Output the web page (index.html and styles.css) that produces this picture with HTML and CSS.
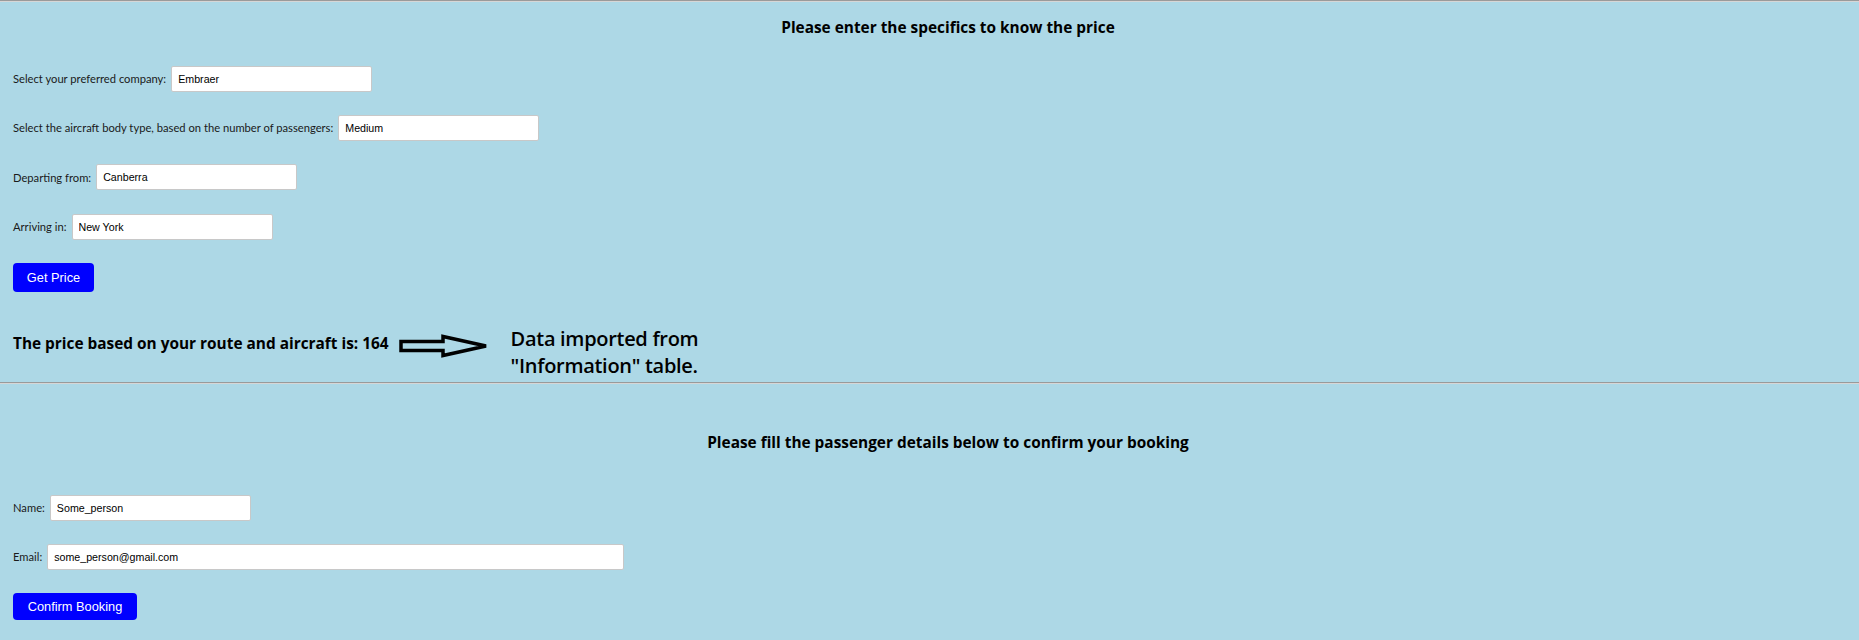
FILE: index.html
```html
<!DOCTYPE html>
<html lang="en">
<head>
<meta charset="utf-8">
<title>Flight booking</title>
<link rel="stylesheet" href="styles.css">
</head>
<body>
<hr class="rule">
<section class="price-section">
  <h3 class="title">Please enter the specifics to know the price</h3>
  <form class="form">
    <div class="row">
      <label class="label">Select your preferred company:</label>
      <input class="field" type="text" value="Embraer">
    </div>
    <div class="row">
      <label class="label">Select the aircraft body type, based on the number of passengers:</label>
      <input class="field" type="text" value="Medium">
    </div>
    <div class="row">
      <label class="label">Departing from:</label>
      <input class="field" type="text" value="Canberra">
    </div>
    <div class="row">
      <label class="label">Arriving in:</label>
      <input class="field" type="text" value="New York">
    </div>
    <div class="row actions">
      <button class="btn get-price" type="button">Get Price</button>
    </div>
  </form>
  <div class="result">
    <h3 class="price">The price based on your route and aircraft is: 164</h3>
    <svg class="arrow" width="92" height="24" viewBox="0 0 92 24">
      <path d="M3 7.5 H45 V2.5 L88 12 L45 21.5 V16.5 H3 Z" fill="none" stroke="#000" stroke-width="3.5" stroke-linejoin="miter"/>
    </svg>
    <p class="note">Data imported from<br>"Information" table.</p>
  </div>
</section>
<hr class="rule">
<section class="booking-section">
  <h3 class="title second">Please fill the passenger details below to confirm your booking</h3>
  <form class="form booking">
    <div class="row">
      <label class="label">Name:</label>
      <input class="field" type="text" value="Some_person">
    </div>
    <div class="row">
      <label class="label">Email:</label>
      <input class="field wide" type="text" value="some_person@gmail.com">
    </div>
    <div class="row actions">
      <button class="btn confirm" type="button">Confirm Booking</button>
    </div>
  </form>
</section>
</body>
</html>
```
FILE: styles.css
```css
html, body {
  margin: 0;
  padding: 0;
}
body {
  background: #add8e6;
  font-family: "Open Sans", "Noto Sans", sans-serif;
  color: #000;
  height: 640px;
  overflow: hidden;
}
.rule {
  margin: 0;
  border: 0;
  border-top: 1px solid #9a9a9a;
  border-bottom: 1px solid #d6d6d6;
  height: 0;
}
.price-section,
.booking-section {
  padding: 0 13px;
}
.title {
  margin: 0;
  font-size: 15.4px;
  line-height: 20px;
  font-weight: 700;
  text-align: center;
  padding-left: 37px;
}
.price-section .title {
  margin-top: 16px;
}
.booking-section .title {
  margin-top: 49px;
}
.form {
  display: flex;
  flex-direction: column;
  gap: 23.3px;
  margin-top: 27.7px;
}
.booking {
  margin-top: 41.8px;
}
.row {
  display: flex;
  align-items: center;
  gap: 5px;
  height: 26px;
}
.row.actions {
  height: auto;
}
.label {
  font-family: Lato, "Open Sans", sans-serif;
  font-size: 11.2px;
  color: #1a1a1a;
}
.field {
  box-sizing: border-box;
  width: 201px;
  height: 26px;
  border: 1px solid #c8c8c8;
  border-radius: 2px;
  background: #fff;
  padding: 0 6px;
  font-family: "Liberation Sans", Arial, sans-serif;
  font-size: 10.67px;
  color: #000;
  outline: none;
}
.field.wide {
  width: 577px;
}
.btn {
  box-sizing: border-box;
  height: 29px;
  border: 0;
  border-radius: 4px;
  background: #0000ff;
  color: #fff;
  font-family: "Liberation Sans", Arial, sans-serif;
  font-size: 12.8px;
  padding: 0 13px;
}
.get-price {
  width: 81px;
}
.confirm {
  width: 124px;
  height: 27px;
}
.result {
  display: flex;
  align-items: flex-start;
  margin-top: 30px;
  margin-bottom: 3px;
}
.price {
  margin: 12px 0 0;
  font-size: 15.4px;
  line-height: 20px;
  font-weight: 700;
}
.arrow {
  margin-left: 9px;
  margin-top: 12px;
}
.note {
  margin: 3px 0 0 21px;
  font-size: 20px;
  line-height: 27px;
  font-weight: 600;
  letter-spacing: -0.3px;
}
```
